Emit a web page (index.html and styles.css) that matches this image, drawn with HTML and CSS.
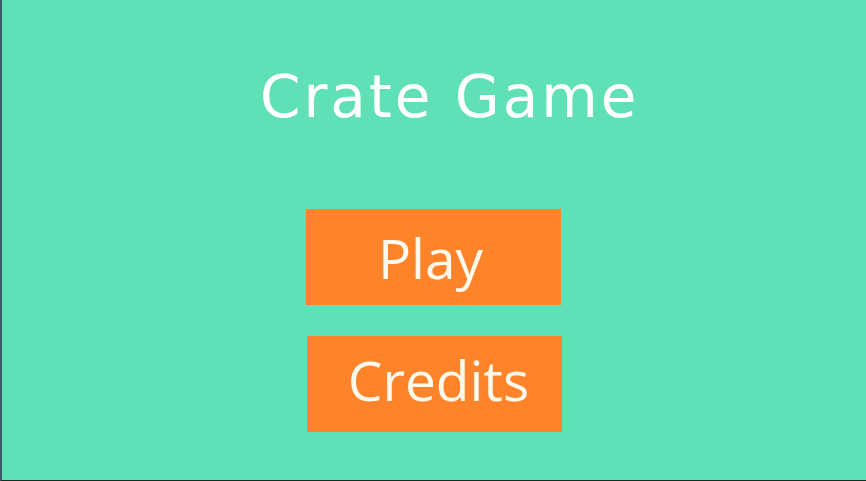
FILE: index.html
```html
<!DOCTYPE html>
<html>
<head>
<meta charset="utf-8">
<link rel="stylesheet" href="styles.css">
</head>
<body>
<div class="screen">
  <h1 class="title">Crate Game</h1>
  <div class="menu">
    <div class="btn btn-play">Play</div>
    <div class="btn btn-credits">Credits</div>
  </div>
</div>
</body>
</html>
```
FILE: styles.css
```css
html, body {
  margin: 0;
  padding: 0;
  width: 866px;
  height: 481px;
  overflow: hidden;
}
.screen {
  box-sizing: border-box;
  width: 866px;
  height: 481px;
  background: #5fe0b6;
  border-left: 2px solid #3c5b6c;
  border-bottom: 1px solid #1b2a22;
  display: flex;
  flex-direction: column;
  align-items: flex-start;
}
.title {
  margin: 62px 0 0 258px;
  font-family: "DejaVu Sans", sans-serif;
  font-weight: 400;
  font-size: 58px;
  line-height: 70px;
  color: #ffffff;
  letter-spacing: 3px;
  white-space: nowrap;
}
.menu {
  display: flex;
  flex-direction: column;
  gap: 31px;
  margin: 77px 0 0 304px;
}
.btn {
  width: 255px;
  height: 96px;
  background: #ff8329;
  color: #fff8ec;
  font-family: "Open Sans", sans-serif;
  font-size: 55px;
  display: flex;
  align-items: center;
  justify-content: center;
  box-sizing: border-box;
}
.btn-play { padding-right: 6px; }
.btn-credits { margin-left: 1px; padding-left: 8px; padding-bottom: 10px; }
```
